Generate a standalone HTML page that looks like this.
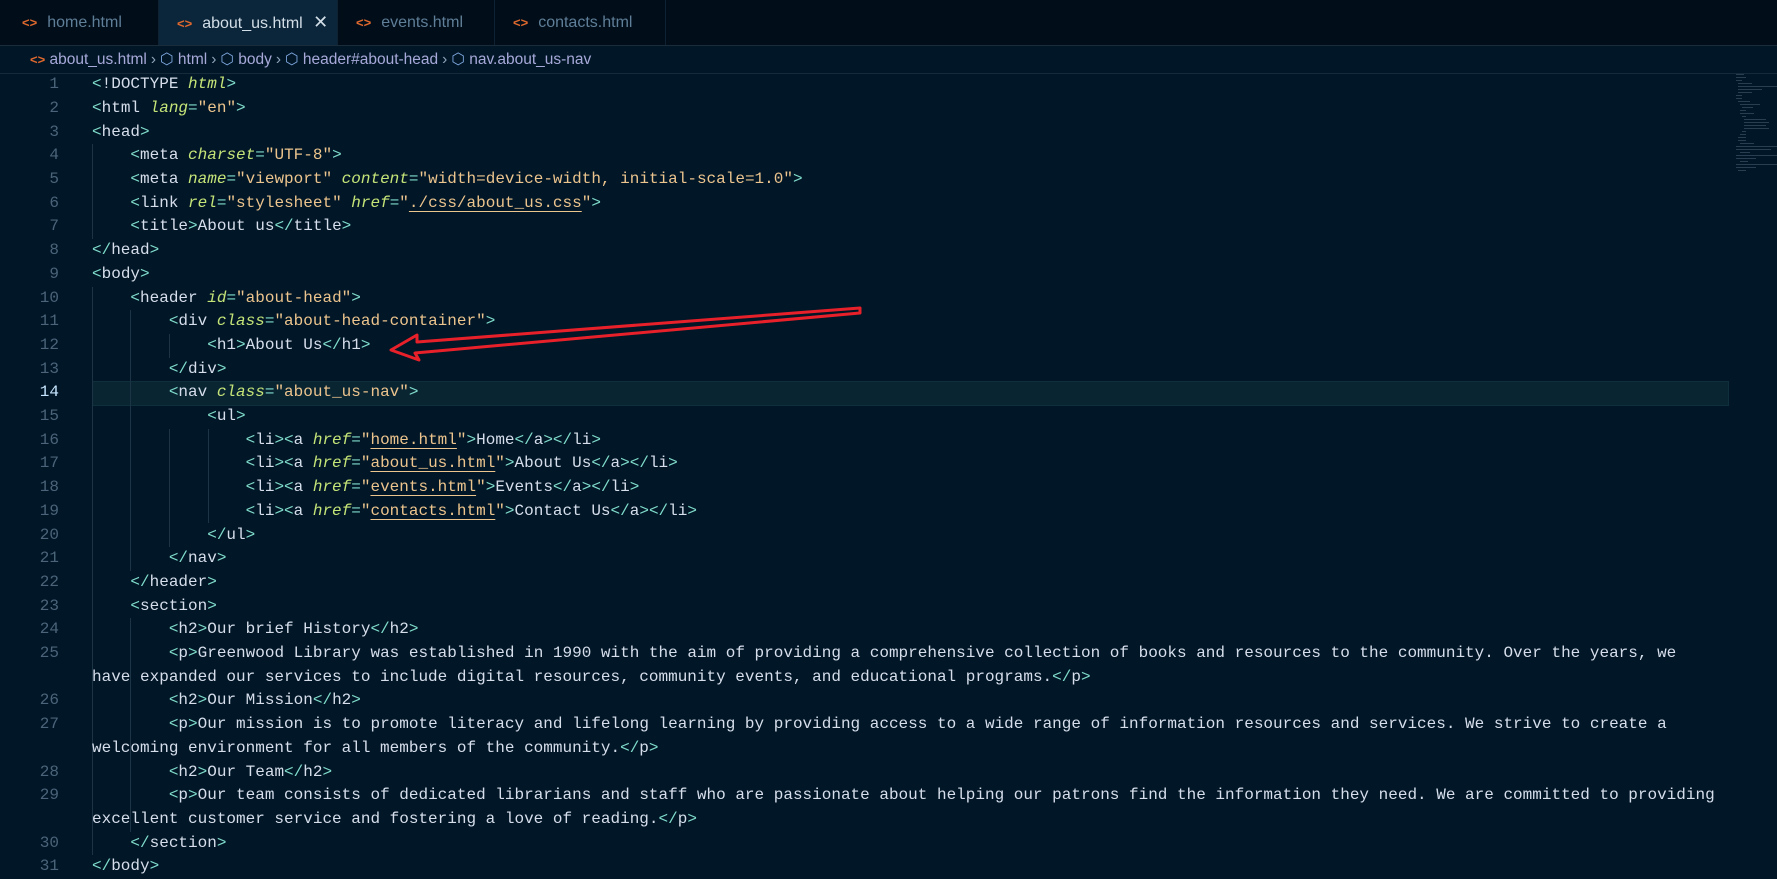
<!DOCTYPE html>
<html><head><meta charset="utf-8"><style>
html,body{margin:0;padding:0;width:1777px;height:868px;overflow:hidden;background:#011627;font-family:"Liberation Sans",sans-serif}
.tabs{position:absolute;left:0;top:0;width:1777px;height:45px;background:#010e1a;border-bottom:1px solid #1a2b3a}
.tab{position:absolute;top:0;height:45px;border-right:1px solid #0f2233;color:#5f7e97;font-size:16px;line-height:45px;box-sizing:border-box}
.tab .ic{color:#e0692e;font-size:13px;font-weight:bold;margin-right:10px}
.tab.act{background:#0b253a;color:#d2dee7}
.bc{position:absolute;left:0;top:46px;height:28px;width:1777px;line-height:28px;font-size:15.5px;color:#a7a9d9;padding-left:30px;box-sizing:border-box;white-space:nowrap}
.bc .sep{color:#8ea4b8;margin:0 4px}
.code{position:absolute;left:0;top:0;font-family:"Liberation Mono",monospace;font-size:16px}
.row{position:absolute;left:0;height:23.7px;line-height:23.7px;white-space:pre;color:#d6deeb}
.ln{position:absolute;width:59px;text-align:right;color:#4b6479}
.tx{position:absolute;left:92px}
.t{color:#7fdbca}.a{color:#c5e478;font-style:italic}.s{color:#ecc48d}.u{text-decoration:underline;text-decoration-color:#ecc48d;text-underline-offset:4px}
.guide{position:absolute;width:1px;background:#1d3447}
.mm{position:absolute;height:1px;background:#4a6275;opacity:.55}
</style></head><body>
<div class="tabs">
<div class="tab" style="left:0;width:159px;padding-left:22px"><span class="ic">&lt;&gt;</span>home.html</div>
<div class="tab act" style="left:159px;width:179px;padding-left:18px"><span class="ic">&lt;&gt;</span>about_us.html <span style="margin-left:6px;font-size:18px">✕</span></div>
<div class="tab" style="left:338px;width:157px;padding-left:18px"><span class="ic">&lt;&gt;</span>events.html</div>
<div class="tab" style="left:495px;width:171px;padding-left:18px"><span class="ic">&lt;&gt;</span>contacts.html</div>
</div>
<div class="bc"><span style="color:#e0692e;font-size:13px;font-weight:bold">&lt;&gt;</span> about_us.html<span class="sep">›</span><span style="color:#7fa8e0">⬡</span> html<span class="sep">›</span><span style="color:#7fa8e0">⬡</span> body<span class="sep">›</span><span style="color:#7fa8e0">⬡</span> header#about-head<span class="sep">›</span><span style="color:#7fa8e0">⬡</span> nav.about_us-nav</div>
<div style="position:absolute;left:0;top:73px;width:1777px;height:1px;background:#152a3b"></div>
<div style="position:absolute;left:92px;top:381px;width:1636px;height:23px;background:#0a2532;border:1px solid #0f2f3d;border-left:none"></div>
<div class="mm" style="left:1736px;top:74px;width:8px"></div><div class="mm" style="left:1736px;top:77px;width:10px"></div><div class="mm" style="left:1736px;top:80px;width:6px"></div>
<div class="mm" style="left:1738px;top:83px;width:14px"></div><div class="mm" style="left:1738px;top:86px;width:39px"></div><div class="mm" style="left:1738px;top:89px;width:24px"></div><div class="mm" style="left:1738px;top:92px;width:14px"></div>
<div class="mm" style="left:1736px;top:95px;width:6px"></div><div class="mm" style="left:1736px;top:98px;width:6px"></div><div class="mm" style="left:1738px;top:101px;width:12px"></div><div class="mm" style="left:1740px;top:104px;width:20px"></div><div class="mm" style="left:1742px;top:107px;width:11px"></div><div class="mm" style="left:1740px;top:110px;width:6px"></div><div class="mm" style="left:1740px;top:113px;width:14px"></div><div class="mm" style="left:1742px;top:116px;width:4px"></div>
<div class="mm" style="left:1744px;top:119px;width:22px"></div><div class="mm" style="left:1744px;top:122px;width:25px"></div><div class="mm" style="left:1744px;top:125px;width:22px"></div><div class="mm" style="left:1744px;top:128px;width:25px"></div>
<div class="mm" style="left:1742px;top:131px;width:4px"></div><div class="mm" style="left:1740px;top:134px;width:6px"></div><div class="mm" style="left:1738px;top:137px;width:8px"></div><div class="mm" style="left:1738px;top:140px;width:8px"></div><div class="mm" style="left:1740px;top:143px;width:14px"></div><div class="mm" style="left:1736px;top:146px;width:41px"></div><div class="mm" style="left:1736px;top:149px;width:35px"></div><div class="mm" style="left:1740px;top:152px;width:10px"></div><div class="mm" style="left:1736px;top:155px;width:41px"></div><div class="mm" style="left:1736px;top:158px;width:20px"></div><div class="mm" style="left:1740px;top:161px;width:8px"></div><div class="mm" style="left:1736px;top:164px;width:41px"></div><div class="mm" style="left:1736px;top:167px;width:20px"></div><div class="mm" style="left:1738px;top:170px;width:8px"></div>
<div class="guide" style="left:92px;top:144.3px;height:94.8px"></div>
<div class="guide" style="left:92px;top:286.5px;height:568.8px"></div>
<div class="guide" style="left:130px;top:310.2px;height:260.7px"></div>
<div class="guide" style="left:130px;top:618.3px;height:213.3px"></div>
<div class="guide" style="left:169px;top:333.9px;height:23.7px"></div>
<div class="guide" style="left:169px;top:428.7px;height:118.5px"></div>
<div class="guide" style="left:208px;top:428.7px;height:94.8px"></div>
<div class="code">
<div class="row" style="top:73.2px"><span class="ln">1</span><span class="tx"><span class="t">&lt;</span>!DOCTYPE <span class="a">html</span><span class="t">&gt;</span></span></div>
<div class="row" style="top:96.9px"><span class="ln">2</span><span class="tx"><span class="t">&lt;</span>html <span class="a">lang</span><span class="t">=</span><span class="s">"en"</span><span class="t">&gt;</span></span></div>
<div class="row" style="top:120.6px"><span class="ln">3</span><span class="tx"><span class="t">&lt;</span>head<span class="t">&gt;</span></span></div>
<div class="row" style="top:144.3px"><span class="ln">4</span><span class="tx">    <span class="t">&lt;</span>meta <span class="a">charset</span><span class="t">=</span><span class="s">"UTF-8"</span><span class="t">&gt;</span></span></div>
<div class="row" style="top:168px"><span class="ln">5</span><span class="tx">    <span class="t">&lt;</span>meta <span class="a">name</span><span class="t">=</span><span class="s">"viewport"</span> <span class="a">content</span><span class="t">=</span><span class="s">"width=device-width, initial-scale=1.0"</span><span class="t">&gt;</span></span></div>
<div class="row" style="top:191.7px"><span class="ln">6</span><span class="tx">    <span class="t">&lt;</span>link <span class="a">rel</span><span class="t">=</span><span class="s">"stylesheet"</span> <span class="a">href</span><span class="t">=</span><span class="s">"<span class="u">./css/about_us.css</span>"</span><span class="t">&gt;</span></span></div>
<div class="row" style="top:215.4px"><span class="ln">7</span><span class="tx">    <span class="t">&lt;</span>title<span class="t">&gt;</span>About us<span class="t">&lt;/</span>title<span class="t">&gt;</span></span></div>
<div class="row" style="top:239.1px"><span class="ln">8</span><span class="tx"><span class="t">&lt;/</span>head<span class="t">&gt;</span></span></div>
<div class="row" style="top:262.8px"><span class="ln">9</span><span class="tx"><span class="t">&lt;</span>body<span class="t">&gt;</span></span></div>
<div class="row" style="top:286.5px"><span class="ln">10</span><span class="tx">    <span class="t">&lt;</span>header <span class="a">id</span><span class="t">=</span><span class="s">"about-head"</span><span class="t">&gt;</span></span></div>
<div class="row" style="top:310.2px"><span class="ln">11</span><span class="tx">        <span class="t">&lt;</span>div <span class="a">class</span><span class="t">=</span><span class="s">"about-head-container"</span><span class="t">&gt;</span></span></div>
<div class="row" style="top:333.9px"><span class="ln">12</span><span class="tx">            <span class="t">&lt;</span>h1<span class="t">&gt;</span>About Us<span class="t">&lt;/</span>h1<span class="t">&gt;</span></span></div>
<div class="row" style="top:357.6px"><span class="ln">13</span><span class="tx">        <span class="t">&lt;/</span>div<span class="t">&gt;</span></span></div>
<div class="row" style="top:381.3px"><span class="ln" style="color:#c5e4fd">14</span><span class="tx">        <span class="t">&lt;</span>nav <span class="a">class</span><span class="t">=</span><span class="s">"about_us-nav"</span><span class="t">&gt;</span></span></div>
<div class="row" style="top:405px"><span class="ln">15</span><span class="tx">            <span class="t">&lt;</span>ul<span class="t">&gt;</span></span></div>
<div class="row" style="top:428.7px"><span class="ln">16</span><span class="tx">                <span class="t">&lt;</span>li<span class="t">&gt;&lt;</span>a <span class="a">href</span><span class="t">=</span><span class="s">"<span class="u">home.html</span>"</span><span class="t">&gt;</span>Home<span class="t">&lt;/</span>a<span class="t">&gt;&lt;/</span>li<span class="t">&gt;</span></span></div>
<div class="row" style="top:452.4px"><span class="ln">17</span><span class="tx">                <span class="t">&lt;</span>li<span class="t">&gt;&lt;</span>a <span class="a">href</span><span class="t">=</span><span class="s">"<span class="u">about_us.html</span>"</span><span class="t">&gt;</span>About Us<span class="t">&lt;/</span>a<span class="t">&gt;&lt;/</span>li<span class="t">&gt;</span></span></div>
<div class="row" style="top:476.1px"><span class="ln">18</span><span class="tx">                <span class="t">&lt;</span>li<span class="t">&gt;&lt;</span>a <span class="a">href</span><span class="t">=</span><span class="s">"<span class="u">events.html</span>"</span><span class="t">&gt;</span>Events<span class="t">&lt;/</span>a<span class="t">&gt;&lt;/</span>li<span class="t">&gt;</span></span></div>
<div class="row" style="top:499.8px"><span class="ln">19</span><span class="tx">                <span class="t">&lt;</span>li<span class="t">&gt;&lt;</span>a <span class="a">href</span><span class="t">=</span><span class="s">"<span class="u">contacts.html</span>"</span><span class="t">&gt;</span>Contact Us<span class="t">&lt;/</span>a<span class="t">&gt;&lt;/</span>li<span class="t">&gt;</span></span></div>
<div class="row" style="top:523.5px"><span class="ln">20</span><span class="tx">            <span class="t">&lt;/</span>ul<span class="t">&gt;</span></span></div>
<div class="row" style="top:547.2px"><span class="ln">21</span><span class="tx">        <span class="t">&lt;/</span>nav<span class="t">&gt;</span></span></div>
<div class="row" style="top:570.9px"><span class="ln">22</span><span class="tx">    <span class="t">&lt;/</span>header<span class="t">&gt;</span></span></div>
<div class="row" style="top:594.6px"><span class="ln">23</span><span class="tx">    <span class="t">&lt;</span>section<span class="t">&gt;</span></span></div>
<div class="row" style="top:618.3px"><span class="ln">24</span><span class="tx">        <span class="t">&lt;</span>h2<span class="t">&gt;</span>Our brief History<span class="t">&lt;/</span>h2<span class="t">&gt;</span></span></div>
<div class="row" style="top:642px"><span class="ln">25</span><span class="tx">        <span class="t">&lt;</span>p<span class="t">&gt;</span>Greenwood Library was established in 1990 with the aim of providing a comprehensive collection of books and resources to the community. Over the years, we</span></div>
<div class="row" style="top:665.7px"><span class="tx">have expanded our services to include digital resources, community events, and educational programs.<span class="t">&lt;/</span>p<span class="t">&gt;</span></span></div>
<div class="row" style="top:689.4px"><span class="ln">26</span><span class="tx">        <span class="t">&lt;</span>h2<span class="t">&gt;</span>Our Mission<span class="t">&lt;/</span>h2<span class="t">&gt;</span></span></div>
<div class="row" style="top:713.1px"><span class="ln">27</span><span class="tx">        <span class="t">&lt;</span>p<span class="t">&gt;</span>Our mission is to promote literacy and lifelong learning by providing access to a wide range of information resources and services. We strive to create a</span></div>
<div class="row" style="top:736.8px"><span class="tx">welcoming environment for all members of the community.<span class="t">&lt;/</span>p<span class="t">&gt;</span></span></div>
<div class="row" style="top:760.5px"><span class="ln">28</span><span class="tx">        <span class="t">&lt;</span>h2<span class="t">&gt;</span>Our Team<span class="t">&lt;/</span>h2<span class="t">&gt;</span></span></div>
<div class="row" style="top:784.2px"><span class="ln">29</span><span class="tx">        <span class="t">&lt;</span>p<span class="t">&gt;</span>Our team consists of dedicated librarians and staff who are passionate about helping our patrons find the information they need. We are committed to providing</span></div>
<div class="row" style="top:807.9px"><span class="tx">excellent customer service and fostering a love of reading.<span class="t">&lt;/</span>p<span class="t">&gt;</span></span></div>
<div class="row" style="top:831.6px"><span class="ln">30</span><span class="tx">    <span class="t">&lt;/</span>section<span class="t">&gt;</span></span></div>
<div class="row" style="top:855.3px"><span class="ln">31</span><span class="tx"><span class="t">&lt;/</span>body<span class="t">&gt;</span></span></div>
</div>
<svg style="position:absolute;left:0;top:0" width="1777" height="868"><polygon points="860,308 417,342 417,335 391,350 419,360 415,353 860,313" fill="none" stroke="#e8202a" stroke-width="3" stroke-linejoin="round"/></svg>
</body></html>
